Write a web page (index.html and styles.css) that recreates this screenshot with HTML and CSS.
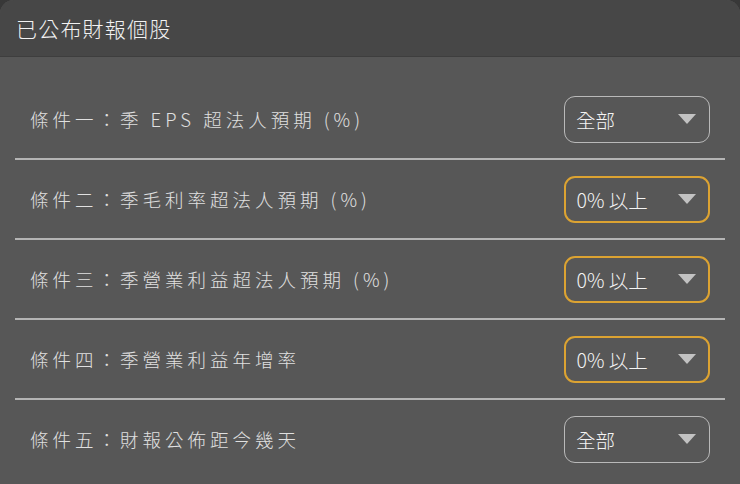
FILE: index.html
```html
<!DOCTYPE html>
<html lang="zh-Hant">
<head>
<meta charset="utf-8">
<link rel="stylesheet" href="styles.css">
</head>
<body>
<div class="panel">
  <div class="header">已公布財報個股</div>
  <div class="list">
    <div class="row">
      <span class="label">條件一：季 EPS 超法人預期 (%)</span>
      <div class="select"><span>全部</span><i class="caret"></i></div>
    </div>
    <div class="row">
      <span class="label">條件二：季毛利率超法人預期 (%)</span>
      <div class="select active"><span>0% 以上</span><i class="caret"></i></div>
    </div>
    <div class="row">
      <span class="label">條件三：季營業利益超法人預期 (%)</span>
      <div class="select active"><span>0% 以上</span><i class="caret"></i></div>
    </div>
    <div class="row">
      <span class="label">條件四：季營業利益年增率</span>
      <div class="select active"><span>0% 以上</span><i class="caret"></i></div>
    </div>
    <div class="row last">
      <span class="label">條件五：財報公佈距今幾天</span>
      <div class="select"><span>全部</span><i class="caret"></i></div>
    </div>
  </div>
</div>
</body>
</html>
```
FILE: styles.css
```css
html, body {
  margin: 0;
  padding: 0;
  background: #383838;
  width: 740px;
  height: 484px;
  overflow: hidden;
  font-family: "Noto Sans CJK TC", "Noto Sans", sans-serif;
}
.panel {
  height: 484px;
  background: #575757;
  border-radius: 14px 14px 0 0;
  overflow: hidden;
}
.header {
  height: 56px;
  border-bottom: 1px solid #3e3e3e;
  background: #474747;
  color: #f2f2f2;
  font-size: 21px;
  font-weight: 300;
  letter-spacing: 1.2px;
  display: flex;
  align-items: center;
  padding-left: 16px;
}
.list {
  padding: 23px 15px 0 15px;
}
.row {
  height: 78px;
  border-bottom: 2px solid #b4b4b4;
  display: flex;
  align-items: center;
  justify-content: space-between;
  padding: 0 15px;
}
.row.last {
  border-bottom: none;
}
.label {
  color: #e0e0e0;
  font-size: 18.5px;
  letter-spacing: 4px;
  font-weight: 300;
}
.select {
  box-sizing: border-box;
  width: 146px;
  height: 47px;
  border: 1.5px solid #b9b9b9;
  border-radius: 11px;
  display: flex;
  align-items: center;
  justify-content: space-between;
  padding: 0 13px 0 11px;
  color: #f4f4f4;
  font-size: 19.5px;
  font-weight: 300;
}
.select.active {
  border: 2px solid #dca332;
  padding: 0 12.5px 0 10.5px;
}
.caret {
  width: 0;
  height: 0;
  border-left: 9px solid transparent;
  border-right: 9px solid transparent;
  border-top: 10px solid #c2c2c2;
}
```
